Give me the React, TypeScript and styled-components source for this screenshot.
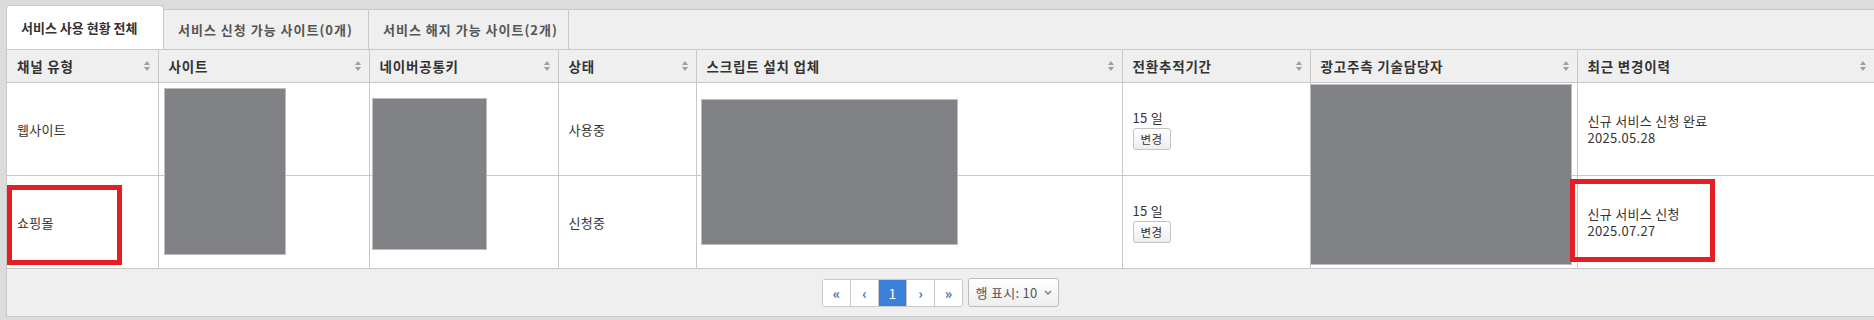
import React from "react";
import styled, { createGlobalStyle, css } from "styled-components";

const GlobalStyle = createGlobalStyle`
  html, body {
    margin: 0;
    padding: 0;
    background: #dcdcdc;
  }
  body {
    font-family: "Noto Sans CJK KR", "Noto Sans", sans-serif;
    color: #333;
  }
`;

const Page = styled.div`
  padding: 9px 0 0 6px;
`;

const Panel = styled.div`
  border-left: 1px solid #c8c8c8;
  border-bottom: 1px solid #c8c8c8;
  background: #efefef;
`;

const TabBar = styled.div`
  display: flex;
  height: 39px;
  border-top: 1px solid #c8c8c8;
`;

const Tab = styled.div<{ $active?: boolean; $w: number }>`
  box-sizing: border-box;
  width: ${(p) => p.$w}px;
  display: flex;
  align-items: center;
  padding-left: 14px;
  font-size: 13px;
  font-weight: bold;
  letter-spacing: 1px;
  color: #555;
  border-right: 1px solid #c8c8c8;
  white-space: nowrap;
  ${(p) =>
    p.$active &&
    css`
      height: 44px;
      margin: -5px 0 0 -1px;
      letter-spacing: 0;
      color: #333;
      background: #fff;
      border: 1px solid #c8c8c8;
      border-bottom: none;
      border-radius: 3px 3px 0 0;
    `}
`;

const TableWrap = styled.div`
  position: relative;
`;

const Table = styled.table`
  width: 100%;
  border-collapse: collapse;
  table-layout: fixed;
`;

const Col = styled.col<{ $w?: number }>`
  width: ${(p) => (p.$w ? `${p.$w}px` : "auto")};
`;

const Th = styled.th`
  height: 32px;
  padding: 0 8px 0 10px;
  background: #efefef;
  border: 1px solid #c8c8c8;
  text-align: left;
  font-size: 13.5px;
  font-weight: bold;
  letter-spacing: 0.8px;
  color: #333;
  &:first-child {
    border-left: none;
  }
  &:last-child {
    border-right: none;
  }
`;

const HeadInner = styled.div`
  display: flex;
  align-items: center;
  justify-content: space-between;
  white-space: nowrap;
`;

const Tr = styled.tr`
  height: 93px;
`;

const Td = styled.td`
  padding: 0 10px;
  background: #fff;
  border: 1px solid #c8c8c8;
  font-size: 13px;
  letter-spacing: 0.3px;
  color: #333;
  vertical-align: middle;
  line-height: 17px;
  &:first-child {
    border-left: none;
  }
  &:last-child {
    border-right: none;
  }
`;

const Line = styled.div`
  white-space: nowrap;
`;

const SmallButton = styled.button`
  display: block;
  margin-top: 2px;
  height: 22px;
  width: 38px;
  padding: 0;
  font-family: inherit;
  font-size: 11.5px;
  letter-spacing: 0.3px;
  color: #333;
  background: linear-gradient(#ffffff, #ededed);
  border: 1px solid #c4c4c4;
  border-radius: 3px;
`;

const Redacted = styled.div`
  position: absolute;
  background: #818286;
  box-shadow: 0 0 0 1px #bdbdbf;
`;

const Marker = styled.div`
  position: absolute;
  box-sizing: border-box;
  border: 5px solid #e41e25;
`;

const Footer = styled.div`
  height: 47px;
  display: flex;
  align-items: center;
  justify-content: center;
  gap: 5px;
`;

const Pager = styled.div`
  display: flex;
  height: 28px;
  box-sizing: border-box;
  border: 1px solid #c8c8c8;
  border-radius: 3px;
  background: #fff;
  overflow: hidden;
`;

const PageBtn = styled.div<{ $active?: boolean }>`
  width: 27px;
  display: flex;
  align-items: center;
  justify-content: center;
  font-size: 14px;
  font-weight: ${(p) => (p.$active ? "normal" : "bold")};
  color: ${(p) => (p.$active ? "#fff" : "#3a6ea8")};
  background: ${(p) => (p.$active ? "#3b80d8" : "#fff")};
  & + & {
    border-left: 1px solid #c8c8c8;
  }
`;

const SizeSelect = styled.div`
  box-sizing: border-box;
  height: 29px;
  width: 91px;
  display: flex;
  align-items: center;
  justify-content: center;
  gap: 6px;
  font-size: 13px;
  letter-spacing: 0.3px;
  color: #555;
  background: linear-gradient(#ffffff, #eeeeee);
  border: 1px solid #bdbdbd;
  border-radius: 3px;
`;

const SortIcon = () => (
  <svg width="6" height="10" viewBox="0 0 6 10">
    <path d="M3 0 L6 4 H0 Z" fill="#a0a0a0" />
    <path d="M3 10 L6 6 H0 Z" fill="#a0a0a0" />
  </svg>
);

const Chevron = () => (
  <svg width="8" height="5" viewBox="0 0 8 5">
    <path d="M1 1 L4 4 L7 1" fill="none" stroke="#777" strokeWidth="1.3" />
  </svg>
);

const columns: { title: string; w?: number }[] = [
  { title: "채널 유형", w: 151 },
  { title: "사이트", w: 211 },
  { title: "네이버공통키", w: 189 },
  { title: "상태", w: 138 },
  { title: "스크립트 설치 업체", w: 426 },
  { title: "전환추적기간", w: 188 },
  { title: "광고주측 기술담당자", w: 267 },
  { title: "최근 변경이력" },
];

const rows = [
  { channel: "웹사이트", status: "사용중", days: "15 일", history: "신규 서비스 신청 완료", date: "2025.05.28" },
  { channel: "쇼핑몰", status: "신청중", days: "15 일", history: "신규 서비스 신청", date: "2025.07.27" },
];

// redaction boxes and annotation marks, in TableWrap coordinates
const redactions = [
  { x: 158, y: 40, w: 120, h: 165 },
  { x: 366, y: 50, w: 113, h: 150 },
  { x: 695, y: 51, w: 255, h: 144 },
  { x: 1304, y: 36, w: 260, h: 179 },
];

const markers = [
  { x: 0, y: 136, w: 115, h: 80 },
  { x: 1563, y: 130, w: 145, h: 83 },
];

export default function App() {
  return (
    <>
      <GlobalStyle />
      <Page>
        <Panel>
          <TabBar>
            <Tab $active $w={158}>서비스 사용 현황 전체</Tab>
            <Tab $w={205}>서비스 신청 가능 사이트(0개)</Tab>
            <Tab $w={200}>서비스 해지 가능 사이트(2개)</Tab>
          </TabBar>
          <TableWrap>
            <Table>
              <colgroup>
                {columns.map((c) => (
                  <Col key={c.title} $w={c.w} />
                ))}
              </colgroup>
              <thead>
                <tr>
                  {columns.map((c) => (
                    <Th key={c.title}>
                      <HeadInner>
                        <span>{c.title}</span>
                        <SortIcon />
                      </HeadInner>
                    </Th>
                  ))}
                </tr>
              </thead>
              <tbody>
                {rows.map((r) => (
                  <Tr key={r.channel}>
                    <Td>{r.channel}</Td>
                    <Td />
                    <Td />
                    <Td>{r.status}</Td>
                    <Td />
                    <Td>
                      <Line>{r.days}</Line>
                      <SmallButton>변경</SmallButton>
                    </Td>
                    <Td />
                    <Td>
                      <Line>{r.history}</Line>
                      <Line>{r.date}</Line>
                    </Td>
                  </Tr>
                ))}
              </tbody>
            </Table>
            {redactions.map((b, i) => (
              <Redacted key={i} style={{ left: b.x, top: b.y, width: b.w, height: b.h }} />
            ))}
            {markers.map((b, i) => (
              <Marker key={i} style={{ left: b.x, top: b.y, width: b.w, height: b.h }} />
            ))}
          </TableWrap>
          <Footer>
            <Pager>
              <PageBtn>«</PageBtn>
              <PageBtn>‹</PageBtn>
              <PageBtn $active>1</PageBtn>
              <PageBtn>›</PageBtn>
              <PageBtn>»</PageBtn>
            </Pager>
            <SizeSelect>
              <span>행 표시: 10</span>
              <Chevron />
            </SizeSelect>
          </Footer>
        </Panel>
      </Page>
    </>
  );
}
